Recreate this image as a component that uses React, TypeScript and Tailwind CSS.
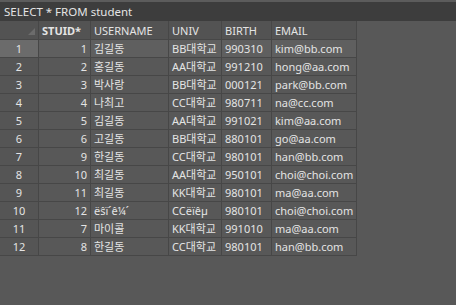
const COLS = [
  { key: "stuid", label: "STUID*", w: "w-[52px]", right: true, bold: true },
  { key: "username", label: "USERNAME", w: "w-[78px]" },
  { key: "univ", label: "UNIV", w: "w-[53px]" },
  { key: "birth", label: "BIRTH", w: "w-[50px]" },
  { key: "email", label: "EMAIL", w: "w-[85px]" },
];

const ROWS = [
  ["1", "김길동", "BB대학교", "990310", "kim@bb.com"],
  ["2", "홍길동", "AA대학교", "991210", "hong@aa.com"],
  ["3", "박사랑", "BB대학교", "000121", "park@bb.com"],
  ["4", "나최고", "CC대학교", "980711", "na@cc.com"],
  ["5", "김길동", "AA대학교", "991021", "kim@aa.com"],
  ["6", "고길동", "BB대학교", "880101", "go@aa.com"],
  ["9", "한길동", "CC대학교", "980101", "han@bb.com"],
  ["10", "최길동", "AA대학교", "950101", "choi@choi.com"],
  ["11", "최길동", "KK대학교", "980101", "ma@aa.com"],
  ["12", "ëŝï´ê¼´", "CCëïêµ", "980101", "choi@choi.com"],
  ["7", "마이콜", "KK대학교", "991010", "ma@aa.com"],
  ["8", "한길동", "CC대학교", "980101", "han@bb.com"],
];

export default function App() {
  return (
    <div
      className="h-[305px] w-[456px] overflow-hidden bg-[#585858] text-[11px] text-[#e4e4e4]"
      style={{ fontFamily: '"Noto Sans", "Noto Sans CJK KR", sans-serif' }}
    >
      <div className="h-[2px] bg-[#5c5c5c]" />
      <div className="flex h-[19px] items-center bg-[#3d3d3d] px-[4px] text-[11.5px] leading-none">SELECT * FROM student</div>

      <div className="w-[357px]">
        <div className="flex h-[19px] bg-[#535353]">
          <div className="relative w-[39px] border-r border-b border-[#474747]">
            <svg className="absolute bottom-[4px] right-[3px]" width="7" height="7" viewBox="0 0 7 7">
              <polygon points="7,0 7,7 0,7" fill="#6c6c6c" />
            </svg>
          </div>
          {COLS.map((c) => (
            <div
              key={c.key}
              className={`${c.w} flex items-center border-r border-b border-[#474747] px-[3px] leading-none ${c.bold ? "font-bold" : ""}`}
            >
              {c.label}
            </div>
          ))}
        </div>

        {ROWS.map((r, i) => {
          const sel = i === 0;
          return (
            <div key={i} className={`flex h-[18px] ${sel ? "bg-[#5f5f5f]" : "bg-[#585858]"}`}>
              <div
                className={`flex w-[39px] items-center justify-center border-r border-b border-[#474747] leading-none ${sel ? "bg-[#6b6b6b]" : "bg-[#555555]"}`}
              >
                {i + 1}
              </div>
              {COLS.map((c, j) => (
                <div
                  key={c.key}
                  className={`${c.w} flex items-center overflow-hidden whitespace-nowrap border-r border-b border-[#474747] px-[3px] leading-none ${c.right ? "justify-end" : ""}`}
                >
                  {r[j]}
                </div>
              ))}
            </div>
          );
        })}
      </div>
    </div>
  );
}
